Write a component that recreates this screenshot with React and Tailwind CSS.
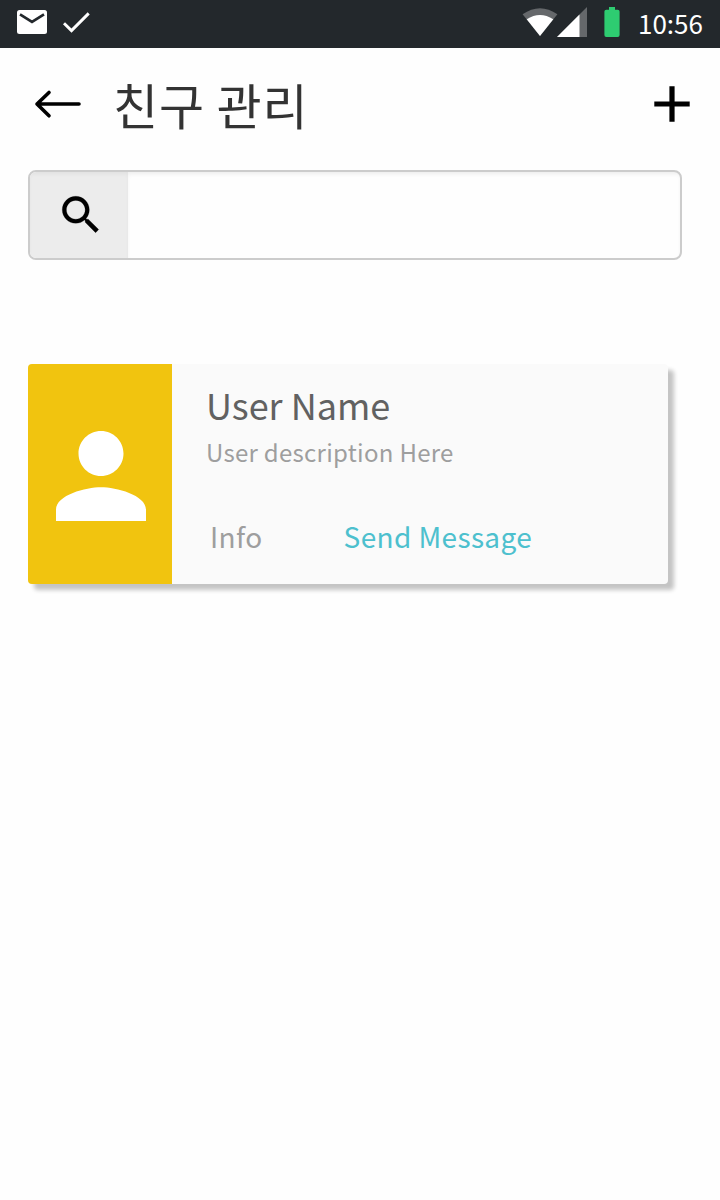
const FONT = "font-['Noto_Sans_CJK_KR','Noto_Sans',sans-serif]";

function StatusBar() {
  return (
    <header className="flex h-12 items-start bg-[#23282c]">
      <svg className="ml-4 h-12 w-20" viewBox="16 0 80 48" fill="none">
        <rect x="17" y="10" width="30" height="24" rx="2.5" fill="#fff" />
        <path d="M20 14.3 32 21.8 44 14.3" stroke="#23282c" strokeWidth="2.7" />
        <path d="M64 23.3 71.5 30.6 88.7 13.4" stroke="#fff" strokeWidth="2.9" />
      </svg>
      <svg className="ml-auto h-12 w-25" viewBox="522 0 100 48">
        <path d="M540 36 522.6 14.2Q540 2.2 557.4 14.2Z" fill="#65686b" />
        <path d="M540 36 526.7 19.2Q540 10.6 553.3 19.2Z" fill="#fff" />
        <path d="M557 37 587 7V37Z" fill="#65686b" />
        <path d="M557 37 579.5 14.5V37Z" fill="#fff" />
        <path d="M609 7h6v2.7h2.7q1.9 0 1.9 1.9V35q0 2-1.9 2h-11.4q-1.9 0-1.9-2V11.6q0-1.9 1.9-1.9H609Z" fill="#2ecc71" />
      </svg>
      <time className="ml-4 w-[82px] text-[26px] leading-[46px] text-white">10:56</time>
    </header>
  );
}

function TitleBar() {
  return (
    <div className="flex h-[122px] items-start">
      <button className="mt-9 ml-8" aria-label="Back">
        <svg className="h-10 w-[52px]" viewBox="32 84 52 40" fill="none" stroke="#000" strokeWidth="3.6" strokeLinecap="round" strokeLinejoin="round">
          <path d="M79 104H37M49 92.5 37 104 49 115.8" />
        </svg>
      </button>
      <h1 className="mt-[18px] ml-[29px] text-[49px] leading-[76px] tracking-[0.8px] text-[#333]">친구 관리</h1>
      <button className="mt-9 mr-7 ml-auto" aria-label="Add">
        <svg className="h-10 w-10" viewBox="652 84 40 40">
          <path d="M669.4 86.3h5.2v15.1h15.1v5.2h-15.1v15.1h-5.2v-15.1h-15.1v-5.2h15.1Z" />
        </svg>
      </button>
    </div>
  );
}

function SearchField() {
  return (
    <label className="mr-[38px] ml-7 flex h-[90px] overflow-hidden rounded-lg border-2 border-[#ccc]">
      <span className="flex w-[98px] shrink-0 items-start bg-[#ececec] pt-[18px] pl-[26px] shadow-[inset_0_3px_4px_-1px_rgba(0,0,0,0.05)]">
        <svg className="size-[50px]" viewBox="0 0 24 24" stroke="#000" strokeWidth="0.1">
          <path d="M15.5 14h-.79l-.28-.27C15.41 12.59 16 11.11 16 9.5 16 5.91 13.09 3 9.5 3S3 5.91 3 9.5 5.91 16 9.5 16c1.61 0 3.09-.59 4.23-1.57l.27.28v.79l5 4.99L20.49 19l-4.99-5zm-6 0C7.01 14 5 11.99 5 9.5S7.01 5 9.5 5 14 7.01 14 9.5 11.99 14 9.5 14z" />
        </svg>
      </span>
      <input className="min-w-0 flex-1 px-4 text-[28px] shadow-[inset_0_3px_4px_-1px_rgba(0,0,0,0.07)] outline-none" aria-label="Search" />
    </label>
  );
}

function UserCard() {
  return (
    <article className="mt-[104px] ml-7 flex h-[220px] w-[640px] rounded bg-[#fafafa] shadow-[6px_6px_4px_#c4c4c4]">
      <div className="flex w-36 items-start rounded-l bg-[#f1c40f] pt-[67px] pl-7">
        <svg className="h-[90px] w-[90px]" viewBox="4 4 16 16" fill="#fff">
          <path d="M12 12c2.21 0 4-1.79 4-4s-1.79-4-4-4-4 1.79-4 4 1.79 4 4 4zm0 2c-2.67 0-8 1.34-8 4v2h16v-2c0-2.66-5.33-4-8-4z" />
        </svg>
      </div>
      <div className="flex flex-col pl-[34px]">
        <h2 className="mt-[15px] text-[36px] leading-[50px] text-[#616161]">User Name</h2>
        <p className="mt-[5px] text-[24px] leading-9 tracking-[0.28px] text-[#9e9e9e]">User description Here</p>
        <div className="mt-[46px] flex gap-[81px] pl-1 text-[28px] leading-10 tracking-[0.38px]">
          <button className="text-[#9e9e9e]">Info</button>
          <button className="text-[#4dc0ce]">Send Message</button>
        </div>
      </div>
    </article>
  );
}

export default function App() {
  return (
    <main className={`min-h-screen w-[720px] bg-[#fefefe] ${FONT}`}>
      <StatusBar />
      <TitleBar />
      <SearchField />
      <UserCard />
    </main>
  );
}
